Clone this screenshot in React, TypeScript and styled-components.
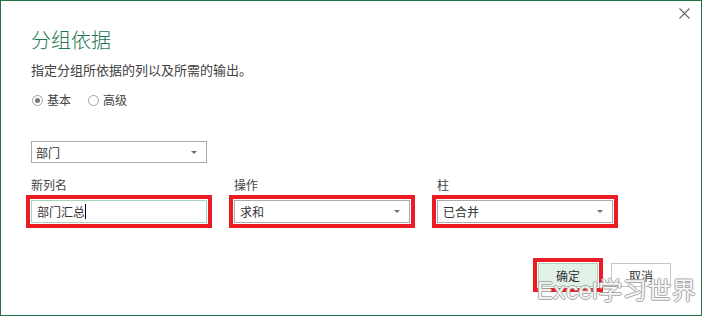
import * as React from 'react'
import styled, { createGlobalStyle } from 'styled-components'

const GlobalStyle = createGlobalStyle`
  html, body {
    margin: 0;
    padding: 0;
    background: #ffffff;
  }
  body {
    font-family: 'Noto Sans CJK SC', 'Noto Sans', sans-serif;
    color: #444444;
  }
`

const Dialog = styled.div`
  position: relative;
  box-sizing: border-box;
  width: 702px;
  height: 316px;
  border: 1px solid #217346;
  background: #ffffff;
  padding: 26px 30px 0 30px;
  display: flex;
  flex-direction: column;
`

const CloseButton = styled.button`
  position: absolute;
  top: 7px;
  right: 11px;
  width: 11px;
  height: 11px;
  padding: 0;
  border: none;
  background: transparent;
  display: flex;
  cursor: pointer;
`

const Title = styled.h1`
  margin: 0;
  font-size: 20px;
  line-height: 26px;
  font-weight: 300;
  color: #23774f;
`

const Subtitle = styled.p`
  margin: 8px 0 0 0;
  font-size: 13px;
  line-height: 18px;
  color: #404040;
`

const RadioGroup = styled.div`
  margin-top: 13px;
  display: flex;
  gap: 16px;
  font-size: 12px;
  line-height: 16px;
`

const RadioItem = styled.label`
  display: flex;
  align-items: center;
  gap: 4px;
  color: #444444;
`

const RadioCircle = styled.span<{ $checked?: boolean }>`
  box-sizing: border-box;
  width: 11px;
  height: 11px;
  margin-left: 1px;
  border-radius: 50%;
  border: 1px solid #a0a0a0;
  background: #ffffff;
  display: flex;
  align-items: center;
  justify-content: center;

  &::after {
    content: '';
    width: 5px;
    height: 5px;
    border-radius: 50%;
    background: ${(p) => (p.$checked ? '#777777' : 'transparent')};
  }
`

const Select = styled.div<{ $marked?: boolean }>`
  box-sizing: border-box;
  width: 176px;
  height: 23px;
  border: 1px solid #ababab;
  background: #ffffff;
  display: flex;
  align-items: center;
  justify-content: space-between;
  padding: 0 9px 0 5px;
  font-size: 12px;
  color: #333333;
  outline: ${(p) => (p.$marked ? '4px solid #ec1c24' : 'none')};
  outline-offset: 1px;
`

const Arrow = styled.span`
  width: 0;
  height: 0;
  border-left: 3px solid transparent;
  border-right: 3px solid transparent;
  border-top: 3px solid #707070;
`

const GroupSelect = styled(Select)`
  margin-top: 33px;
  height: 22px;
  padding-left: 4px;
`

const FieldRow = styled.div`
  margin-top: 14px;
  display: flex;
  gap: 27px;
`

const Field = styled.div`
  display: flex;
  flex-direction: column;
  gap: 7px;
`

const FieldLabel = styled.label`
  font-size: 12px;
  line-height: 16px;
  color: #444444;
`

const TextInput = styled.div`
  box-sizing: border-box;
  width: 176px;
  height: 23px;
  border: 1px solid #a3d5b6;
  background: #ffffff;
  display: flex;
  align-items: center;
  padding: 0 5px;
  font-size: 12px;
  color: #333333;
  outline: 4px solid #ec1c24;
  outline-offset: 1px;
`

const Caret = styled.span`
  width: 1px;
  height: 15px;
  background: #000000;
`

const Footer = styled.div`
  margin-top: 40px;
  display: flex;
  justify-content: flex-end;
  gap: 13px;
`

const Button = styled.button<{ $primary?: boolean }>`
  box-sizing: border-box;
  width: 60px;
  height: 24px;
  padding: 0;
  font-family: inherit;
  font-size: 12px;
  color: #333333;
  background: ${(p) => (p.$primary ? '#e2f1e7' : '#ffffff')};
  border: 1px solid ${(p) => (p.$primary ? '#a3d5b6' : '#c6c6c6')};
  outline: ${(p) => (p.$primary ? '4px solid #ec1c24' : 'none')};
  outline-offset: 1px;
`

const Watermark = styled.div`
  position: absolute;
  left: 536px;
  top: 276px;
  font-family: 'Liberation Sans', 'Noto Sans CJK SC', sans-serif;
  font-size: 24px;
  line-height: 28px;
  letter-spacing: 0.5px;
  color: rgba(255, 255, 255, 0.92);
  text-shadow: -1px 0 #a8a8a8, 1px 0 #a8a8a8, 0 -1px #a8a8a8, 0 1px #a8a8a8;
  pointer-events: none;
  white-space: nowrap;
`

const App = () => (
  <>
    <GlobalStyle />
    <Dialog>
      <CloseButton aria-label="关闭">
        <svg width="11" height="11" viewBox="0 0 11 11">
          <path d="M0.5 0.5 L10.5 10.5 M10.5 0.5 L0.5 10.5" stroke="#666666" strokeWidth="1.1" fill="none" />
        </svg>
      </CloseButton>
      <Title>分组依据</Title>
      <Subtitle>指定分组所依据的列以及所需的输出。</Subtitle>
      <RadioGroup>
        <RadioItem>
          <RadioCircle $checked />
          基本
        </RadioItem>
        <RadioItem>
          <RadioCircle />
          高级
        </RadioItem>
      </RadioGroup>
      <GroupSelect>
        <span>部门</span>
        <Arrow />
      </GroupSelect>
      <FieldRow>
        <Field>
          <FieldLabel>新列名</FieldLabel>
          <TextInput>
            <span>部门汇总</span>
            <Caret />
          </TextInput>
        </Field>
        <Field>
          <FieldLabel>操作</FieldLabel>
          <Select $marked>
            <span>求和</span>
            <Arrow />
          </Select>
        </Field>
        <Field>
          <FieldLabel>柱</FieldLabel>
          <Select $marked>
            <span>已合并</span>
            <Arrow />
          </Select>
        </Field>
      </FieldRow>
      <Footer>
        <Button $primary>确定</Button>
        <Button>取消</Button>
      </Footer>
      <Watermark>Excel学习世界</Watermark>
    </Dialog>
  </>
)

export default App
